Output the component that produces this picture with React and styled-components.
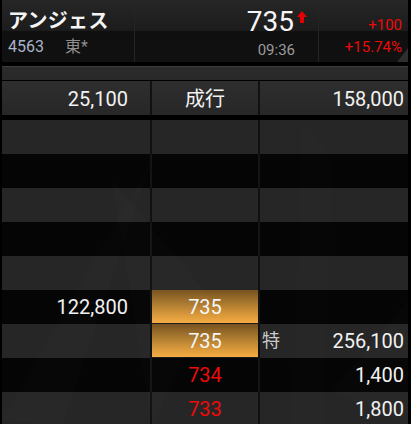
import React from "react";
import styled, { createGlobalStyle } from "styled-components";

const GlobalStyle = createGlobalStyle`
  html, body { margin: 0; padding: 0; background: #000; }
  body { font-family: Roboto, "Noto Sans CJK JP", "Noto Sans", sans-serif; }
  * { box-sizing: border-box; }
`;

const Page = styled.div`
  position: relative;
  width: 411px;
  height: 424px;
  overflow: hidden;
  background: #000;
  padding: 0 3px 0 2px;
`;

const Header = styled.div`
  display: grid;
  grid-template-columns: 132px 183px 1fr;
  column-gap: 1px;
  height: 62px;
  background: #242424;
`;

const HeadCell = styled.div`
  position: relative;
  display: flex;
  flex-direction: column;
  align-items: ${(p) => (p.$align === "right" ? "flex-end" : "flex-start")};
  padding: ${(p) => p.$pad || "0"};
  background: linear-gradient(
    to bottom,
    #262626 0%,
    #1c1c1c 49%,
    #0f0f0f 51%,
    #111 100%
  );
`;

const Name = styled.div`
  margin-top: 9px;
  height: 25px;
  font-size: 20px;
  font-weight: 700;
  color: #f4f4f4;
  letter-spacing: 0.3px;
  line-height: 25px;
`;

const CodeLine = styled.div`
  display: flex;
  gap: 21px;
  margin-top: 3px;
  font-size: 16px;
  line-height: 20px;
`;

const Code = styled.span`
  color: #aab2c8;
`;

const Market = styled.span`
  color: #8e8e8e;
`;

const PriceLine = styled.div`
  display: flex;
  align-items: flex-start;
  margin-top: 6px;
  height: 32px;
`;

const Price = styled.span`
  font-size: 28px;
  line-height: 32px;
  color: #f6f6f6;
  margin-right: 3px;
`;

const Arrow = styled.svg`
  margin-top: 5px;
  margin-right: 11px;
`;

const Time = styled.div`
  font-size: 15px;
  line-height: 18px;
  color: #9b9b9b;
  margin-right: 23px;
  margin-top: 3px;
`;

const Change = styled.div`
  font-size: 15px;
  line-height: 18px;
  color: #ee0a0a;
  margin-top: ${(p) => p.$top}px;
`;

const Corner = styled.div`
  position: absolute;
  right: 0;
  bottom: 0;
  width: 0;
  height: 0;
  border-left: 11px solid transparent;
  border-bottom: 14px solid #2e2e2e;
`;

const Strip = styled.div`
  margin-top: 4px;
  height: 14px;
  background: linear-gradient(to bottom, #3d3d3d 0, #3d3d3d 1px, #2b2b2b 1px, #282828 100%);
`;

const Book = styled.div`
  position: relative;
  display: flex;
  flex-direction: column;
  margin-top: ${(p) => p.$top || 0}px;
`;

const Row = styled.div`
  display: grid;
  grid-template-columns: 148px 106px 1fr;
  column-gap: 2px;
  height: 34px;
  background: ${(p) => (p.$tone === "dark" ? "#141414" : "#111")};
`;

const toneBg = {
  top: "linear-gradient(to bottom, #2e2e2e, #272727)",
  gray: "#262626",
  dark: "#050505",
};

const Cell = styled.div`
  display: flex;
  align-items: center;
  justify-content: ${(p) => p.$justify || "flex-end"};
  padding: ${(p) => p.$pad || "0"};
  background: ${(p) => toneBg[p.$tone]};
  font-size: 20px;
  color: ${(p) => (p.$red ? "#ee0a0a" : "#f2f2f2")};
  line-height: 24px;
`;

const OrangeCell = styled(Cell)`
  background: linear-gradient(to bottom, #77521f 0%, #a3742d 35%, #d9983a 75%, #f5ab42 100%);
  border-bottom: 1px solid #1a1a1a;
  background-clip: padding-box;
  color: #f6f6f6;
  padding-top: 1px;
`;

const Tok = styled.span`
  font-size: 18px;
  color: #c9c9c9;
  margin-right: auto;
`;

const Decor = styled.svg`
  position: absolute;
  left: 0;
  top: 0;
  pointer-events: none;
`;

const rows = [
  { tone: "gray", l: "", m: "", r: "" },
  { tone: "dark", l: "", m: "", r: "" },
  { tone: "gray", l: "", m: "", r: "" },
  { tone: "dark", l: "", m: "", r: "" },
  { tone: "gray", l: "", m: "", r: "" },
  { tone: "dark", l: "122,800", m: "735", orange: true, r: "" },
  { tone: "gray", l: "", m: "735", orange: true, r: "256,100", tok: "特" },
  { tone: "dark", l: "", m: "734", red: true, r: "1,400" },
  { tone: "gray", l: "", m: "733", red: true, r: "1,800" },
];

export default function App() {
  return (
    <>
      <GlobalStyle />
      <Page>
        <Header>
          <HeadCell $pad="0 0 0 6px">
            <Name>アンジェス</Name>
            <CodeLine>
              <Code>4563</Code>
              <Market>東*</Market>
            </CodeLine>
          </HeadCell>
          <HeadCell $align="right">
            <PriceLine>
              <Price>735</Price>
              <Arrow width="10" height="12" viewBox="0 0 10 12">
                <path d="M5 0 L10 6 L7 6 L7 12 L3 12 L3 6 L0 6 Z" fill="#e60000" />
              </Arrow>
            </PriceLine>
            <Time>09:36</Time>
          </HeadCell>
          <HeadCell $align="right" $pad="0 6px 0 0">
            <Change $top={16}>+100</Change>
            <Change $top={4}>+15.74%</Change>
            <Corner />
          </HeadCell>
        </Header>
        <Strip />
        <Book $top={1}>
          <Row $tone="top">
            <Cell $tone="top" $pad="2px 22px 0 0">25,100</Cell>
            <Cell $tone="top" $justify="center" $pad="2px 0 0 0">成行</Cell>
            <Cell $tone="top" $pad="2px 4px 0 0">158,000</Cell>
          </Row>
        </Book>
        <Book $top={5}>
          {rows.map((r, i) => {
            const Mid = r.orange ? OrangeCell : Cell;
            return (
              <Row key={i} $tone={r.tone}>
                <Cell $tone={r.tone} $pad="0 22px 0 0">{r.l}</Cell>
                <Mid $tone={r.tone} $justify="center" $red={r.red}>{r.m}</Mid>
                <Cell $tone={r.tone} $pad="0 4px 0 2px">
                  {r.tok && <Tok>{r.tok}</Tok>}
                  {r.r}
                </Cell>
              </Row>
            );
          })}
          <Decor width="406" height="306" viewBox="0 0 406 306">
            <polygon points="0,300 150,40 60,306" fill="rgba(255,255,255,0.012)" />
            <polygon points="110,60 210,180 150,306" fill="rgba(255,255,255,0.01)" />
            <polygon points="300,0 330,40 322,306 290,306" fill="rgba(255,255,255,0.008)" />
            <polygon points="406,180 330,270 406,306" fill="rgba(255,255,255,0.012)" />
          </Decor>
        </Book>
      </Page>
    </>
  );
}
